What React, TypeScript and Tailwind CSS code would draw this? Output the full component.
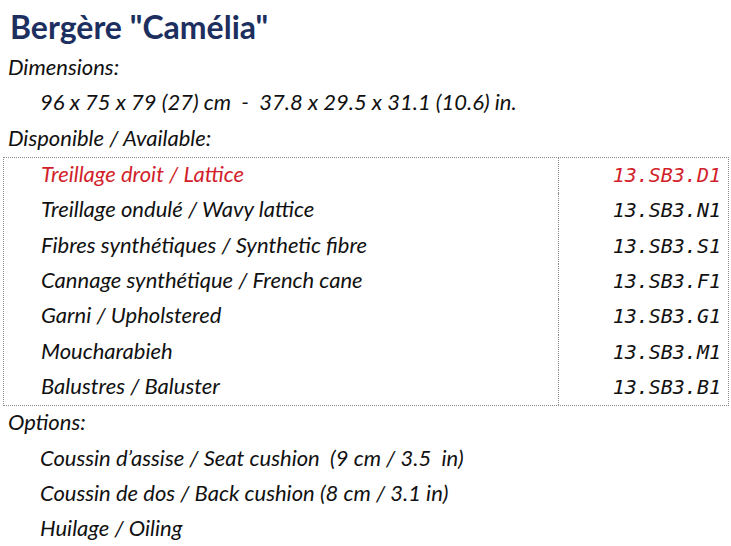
import React from "react";

const rows: { label: string; code: string; red?: boolean }[] = [
  { label: "Treillage droit / Lattice", code: "13.SB3.D1", red: true },
  { label: "Treillage ondulé / Wavy lattice", code: "13.SB3.N1" },
  { label: "Fibres synthétiques / Synthetic fibre", code: "13.SB3.S1" },
  { label: "Cannage synthétique / French cane", code: "13.SB3.F1" },
  { label: "Garni / Upholstered", code: "13.SB3.G1" },
  { label: "Moucharabieh", code: "13.SB3.M1" },
  { label: "Balustres / Baluster", code: "13.SB3.B1" },
];

export default function App() {
  return (
    <div
      className="w-[731px] h-[546px] bg-white text-[#111] overflow-hidden"
      style={{ fontFamily: "Lato, 'Open Sans', sans-serif" }}
    >
      <h1 className="pl-[10px] pt-[6px] h-[51px] text-[32px] leading-[42px] font-bold text-[#1c2f5f]">
        Bergère "Camélia"
      </h1>
      <div className="italic text-[22px]">
        <div className="h-[35.4px] leading-[32px] pl-[8px]">Dimensions:</div>
        <div className="h-[35.4px] leading-[32px] pl-[40px] whitespace-pre">
          96 x 75 x 79 (27) cm  -  37.8 x 29.5 x 31.1 (10.6) in.
        </div>
        <div className="h-[35.4px] leading-[32px] pl-[8px]">Disponible / Available:</div>
        <div className="ml-[3px] w-[726px] border border-dotted border-[#8a8a8a]">
          {rows.map((r) => (
            <div
              key={r.code}
              className={`flex h-[35.3px] ${r.red ? "text-[#d21f2b]" : ""}`}
            >
              <div className="w-[555px] pl-[37px] leading-[32px] border-r border-dotted border-[#8a8a8a]">
                {r.label}
              </div>
              <div
                className="flex-1 text-right pr-[7px] leading-[34px] text-[20px]"
                style={{ fontFamily: "'DejaVu Sans Mono', 'Liberation Mono', monospace" }}
              >
                {r.code}
              </div>
            </div>
          ))}
        </div>
        <div className="h-[35.4px] leading-[32px] pl-[8px]">Options:</div>
        <div className="h-[35.4px] leading-[32px] pl-[40px] whitespace-pre">
          Coussin d’assise / Seat cushion  (9 cm / 3.5  in)
        </div>
        <div className="h-[35.4px] leading-[32px] pl-[40px]">
          Coussin de dos / Back cushion (8 cm / 3.1 in)
        </div>
        <div className="h-[35.4px] leading-[32px] pl-[40px]">Huilage / Oiling</div>
      </div>
    </div>
  );
}
